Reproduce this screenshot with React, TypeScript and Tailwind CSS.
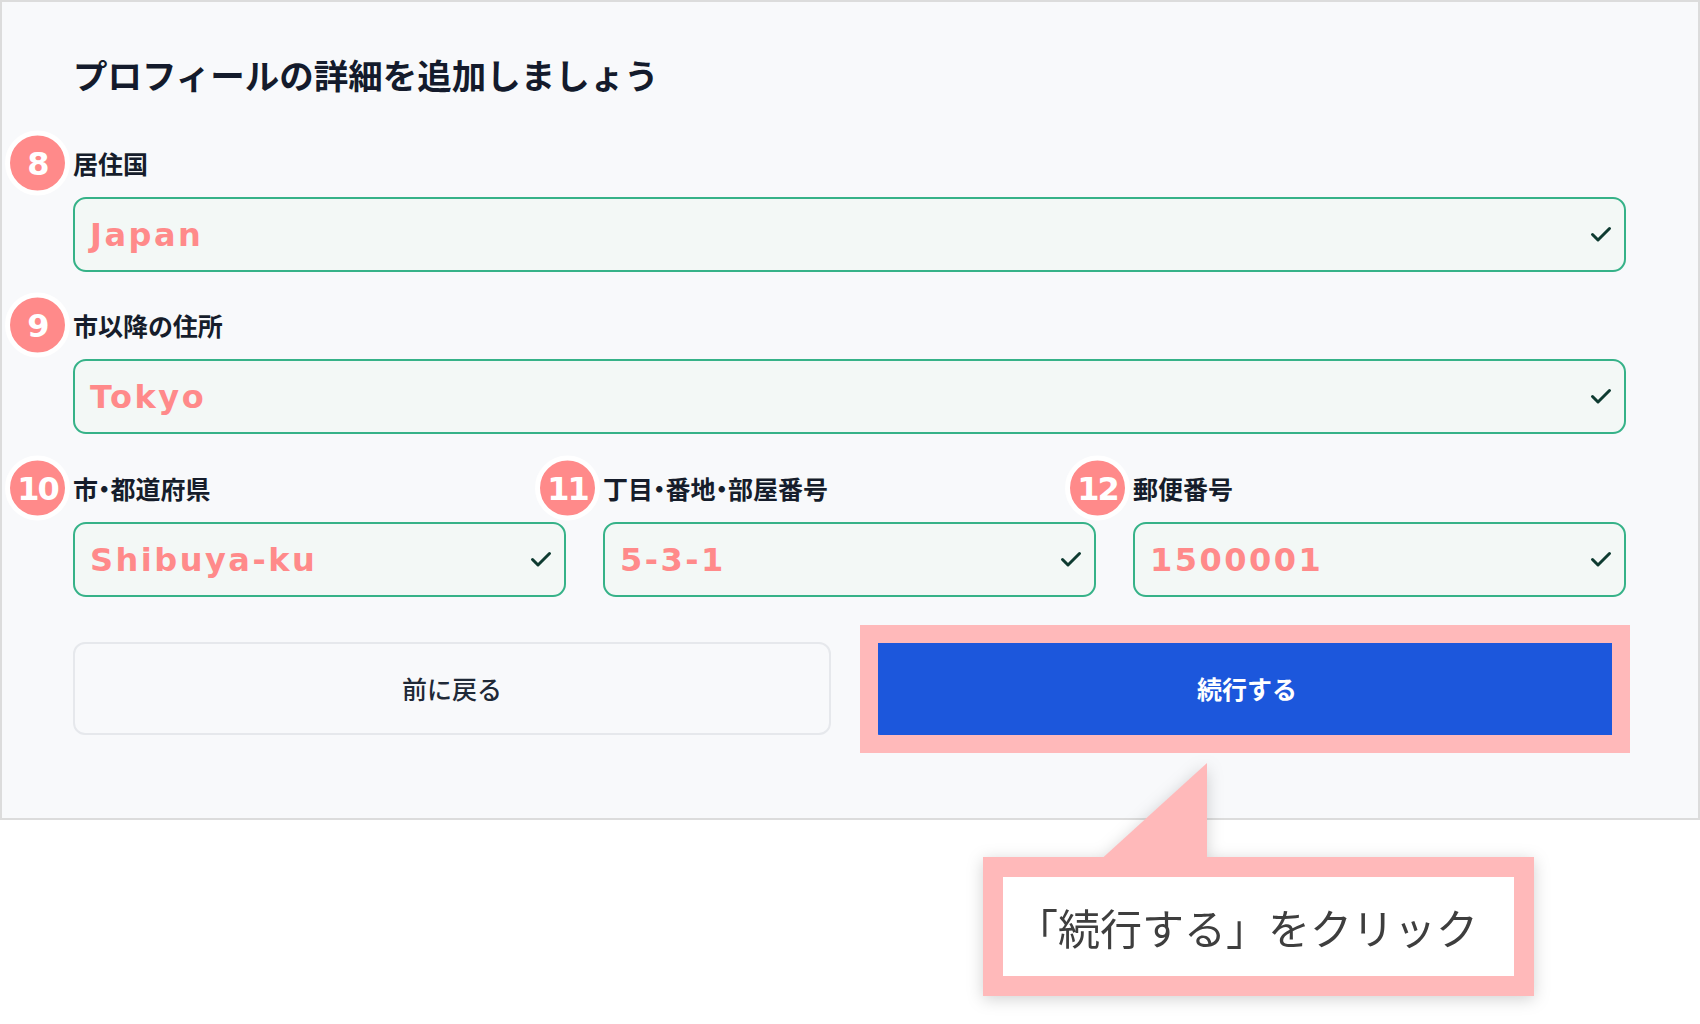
import React from "react";

const jp = "font-['Noto_Sans_CJK_JP','Noto_Sans',sans-serif]";

function Badge({ n }: { n: string }) {
  return (
    <div className="absolute left-[-68px] top-1/2 -translate-y-1/2 w-[65px] h-[65px] rounded-full border-[5px] border-white bg-[#ff8a8a] flex items-center justify-center">
      <span className="font-['DejaVu_Sans',sans-serif] font-bold text-[32px] leading-none tracking-[-2px] text-white">
        {n}
      </span>
    </div>
  );
}

function Check() {
  return (
    <svg width="22" height="17" viewBox="0 0 22 17" fill="none">
      <polyline
        points="2.5,8.5 8,14 19.5,2.5"
        stroke="#0e3b31"
        strokeWidth="3"
        strokeLinecap="round"
        strokeLinejoin="round"
      />
    </svg>
  );
}

function Field({
  n,
  label,
  value,
  className = "",
}: {
  n: string;
  label: string;
  value: string;
  className?: string;
}) {
  return (
    <div className={className}>
      <div className="relative h-[32px] mb-[18px] flex items-center">
        <Badge n={n} />
        <span className={`${jp} text-[25px] leading-[32px] font-semibold text-[#161d2b] [font-feature-settings:'palt']`}>
          {label}
        </span>
      </div>
      <div className="h-[75px] rounded-[13px] border-2 border-[#36b288] bg-[#f3f8f6] pl-[15px] pr-[12px] flex items-center justify-between">
        <span className="font-['DejaVu_Sans',sans-serif] font-bold text-[32px] leading-none tracking-[2.5px] text-[#ff8a8a]">
          {value}
        </span>
        <Check />
      </div>
    </div>
  );
}

export default function App() {
  return (
    <div className={`relative w-[1700px] h-[1024px] bg-white overflow-hidden ${jp}`}>
      <div className="h-[820px] border-2 border-[#dcdcdc] bg-[#f8f9fb] pt-[52px] pl-[71px] pr-[72px]">
        <h1 className={`${jp} text-[34.5px] leading-[40px] font-bold text-[#141b2c]`}>
          プロフィールの詳細を追加しましょう
        </h1>

        <Field n="8" label="居住国" value="Japan" className="mt-[53px]" />
        <Field n="9" label="市以降の住所" value="Tokyo" className="mt-[37px]" />

        <div className="mt-[38px] grid grid-cols-3 gap-x-[37px]">
          <Field n="10" label="市・都道府県" value="Shibuya-ku" />
          <Field n="11" label="丁目・番地・部屋番号" value="5-3-1" />
          <Field n="12" label="郵便番号" value="1500001" />
        </div>

        <div className="mt-[45px] grid grid-cols-2 gap-x-[37px]">
          <button className="h-[93px] rounded-[12px] border-2 border-[#e6e8ec] bg-[#f8f9fb] flex items-center justify-center">
            <span className={`${jp} text-[25px] font-medium text-[#1f2937]`}>前に戻る</span>
          </button>
          <div className="relative">
            <button className="w-full h-[93px] rounded-[12px] bg-[#1c57dc] flex items-center justify-center">
              <span className={`${jp} text-[25px] font-semibold text-white`}>続行する</span>
            </button>
            <div className="absolute left-[-8px] right-[-4px] top-[-17px] bottom-[-18px] border-[18px] border-[#ffb9ba]" />
          </div>
        </div>
      </div>

      {/* callout */}
      <div className="absolute left-0 top-0 w-[1700px] h-[1024px] pointer-events-none [filter:drop-shadow(0_3px_8px_rgba(0,0,0,0.18))]">
        <svg className="absolute left-[1097px] top-[763px]" width="110" height="100" viewBox="0 0 110 100">
          <polygon points="110,0 110,100 0,100" fill="#ffb9ba" />
        </svg>
        <div className="absolute left-[983px] top-[857px] w-[551px] h-[139px] border-[20px] border-[#ffb9ba] bg-white flex items-center justify-start pl-[13px]">
          <span className={`${jp} text-[42px] leading-none font-normal text-[#3e3e3e] whitespace-nowrap`}>「続行する」をクリック</span>
        </div>
      </div>
    </div>
  );
}
